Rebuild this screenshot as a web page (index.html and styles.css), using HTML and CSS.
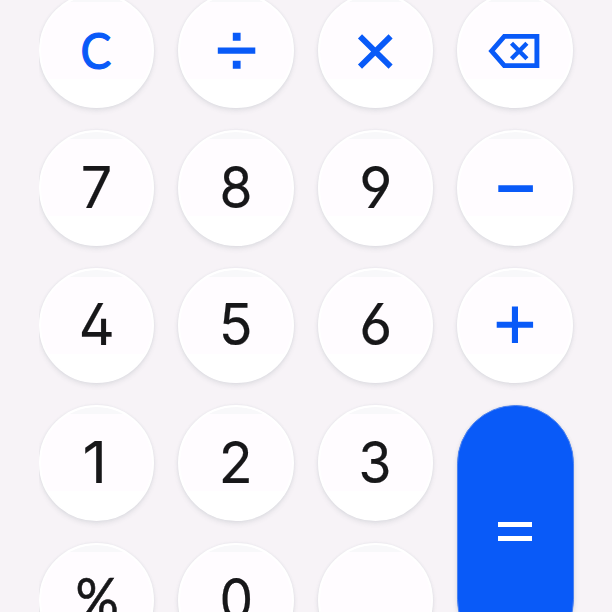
FILE: index.html
```
<!DOCTYPE html>
<html lang="en">
<head>
<meta charset="utf-8">
<title>Calculator</title>
<link rel="stylesheet" href="styles.css">
</head>
<body>
<main class="keypad">
  <button class="key clear"><span>C</span></button>
  <button class="key" aria-label="Divide"><svg class="icon" viewBox="0 0 116 116"><path d="M39.8 54.6h37.5v6.1H39.8zM54.8 39.8h7.8v8H54.8zM54.8 67.8h7.8v8H54.8z"/></svg></button>
  <button class="key" aria-label="Multiply"><svg class="icon" viewBox="0 0 116 116"><path class="line" d="M43 43.4L73.6 73.6M73.6 43.4L43 73.6"/></svg></button>
  <button class="key" aria-label="Delete"><svg class="icon" viewBox="0 0 116 116"><path class="outline" d="M34.6 58L47.3 43.4H79.9V72.6H47.3Z"/><path class="cross" d="M54.5 50.3L69.9 65.7M69.9 50.3L54.5 65.7"/></svg></button>

  <button class="key digit wide"><span>7</span></button>
  <button class="key digit"><span>8</span></button>
  <button class="key digit round"><span>9</span></button>
  <button class="key" aria-label="Subtract"><svg class="icon" viewBox="0 0 116 116"><path d="M41.3 55.2h34.6v6.8H41.3z"/></svg></button>

  <button class="key digit wide"><span>4</span></button>
  <button class="key digit wide"><span>5</span></button>
  <button class="key digit round"><span>6</span></button>
  <button class="key" aria-label="Add"><svg class="icon" viewBox="0 0 116 116"><path d="M39.7 54.8h15.2V39.5H61v15.3h15.1v5.9H61v15.3h-6.1V60.7H39.7z"/></svg></button>

  <button class="key digit one"><span>1</span></button>
  <button class="key digit wide"><span>2</span></button>
  <button class="key digit"><span>3</span></button>
  <button class="key equals" aria-label="Equals"><svg class="equals-icon" viewBox="0 0 34 20"><path d="M0 0h34v5H0zM0 14h34v5H0z"/></svg></button>

  <button class="key digit percent"><span>%</span></button>
  <button class="key digit"><span>0</span></button>
  <button class="key" aria-label="Blank"></button>
</main>
</body>
</html>
```

FILE: styles.css
```
* { box-sizing: border-box; }

html, body {
  width: 612px;
  height: 612px;
  margin: 0;
  overflow: hidden;
  background: #f7f3f7;
}

.keypad {
  display: grid;
  grid-template-columns: repeat(4, 115.6px);
  grid-auto-rows: 115.4px;
  column-gap: 23.8px;
  row-gap: 22px;
  height: 619px;
  margin: -7px 0 0 38.8px;
  overflow: hidden;
  overflow: clip;
}

.key {
  display: flex;
  align-items: center;
  justify-content: center;
  padding: 0;
  border: 2px solid #fff;
  border-radius: 58px;
  background: linear-gradient(#f8f8fa 0 7px, #fffcff 7px 84px, #fff 84px) padding-box, #fff;
  box-shadow: 0 3px 5px rgba(80, 95, 110, .12), 0 0 3px rgba(110, 130, 145, .12);
  color: #171719;
  font-family: Inter, "Noto Sans", sans-serif;
  line-height: 1;
}

.digit {
  font-size: 58px;
  font-weight: 400;
  font-feature-settings: "cv02", "cv03", "cv04";
  -webkit-text-stroke: .2px #171719;
}

.digit span { transform: translate(0, -1.2px) scaleX(.92); }
.wide span { transform: translate(0, -1.2px) scaleX(.96); }
.round span { transform: translate(0, -1.2px) scaleX(.98); }
.one span { transform: translate(-2px, -1.2px) scaleX(1.04); }

.percent {
  font-family: Lato, sans-serif;
  font-size: 60px;
  -webkit-text-stroke: .6px #171719;
}

.percent span { transform: translate(0, -2px) scaleX(.9); }

.clear {
  color: #095af8;
  font-family: Lato, sans-serif;
  font-size: 50px;
  -webkit-text-stroke: 1.2px #095af8;
}

.clear span { transform: translate(-0.8px, -1px) scaleX(.92); }

.icon {
  flex: none;
  width: 116px;
  height: 116px;
  fill: #095af8;
}

.line, .outline, .cross {
  fill: none;
  stroke: #095af8;
  stroke-width: 5.8;
}

.outline { stroke-width: 4.9; }

.cross {
  stroke-width: 4.4;
}

.equals {
  grid-row: span 2;
  width: 117.5px;
  border: 1px solid #4c82ef;
  border-radius: 59px;
  background: #095af8;
}

.equals-icon {
  width: 34px;
  height: 20px;
  margin-right: 1px;
  fill: #fff;
}
```
